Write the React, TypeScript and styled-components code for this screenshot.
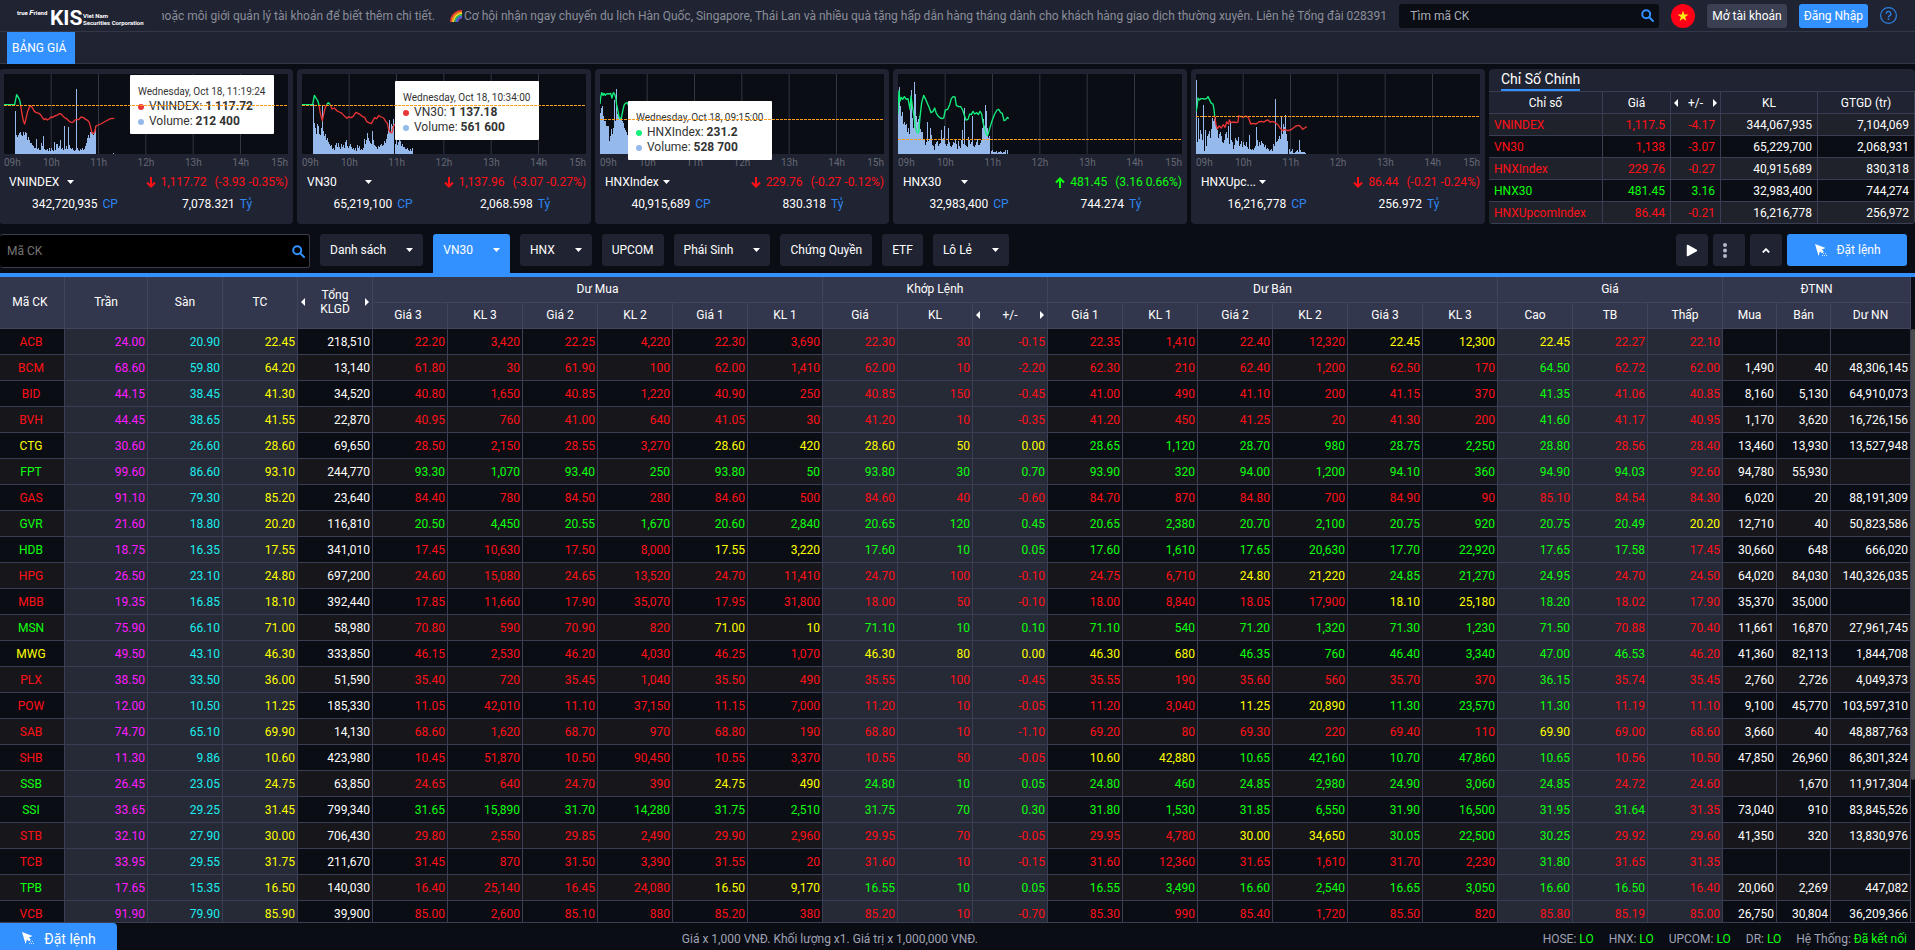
import React from "react";
import styled, { createGlobalStyle, css } from "styled-components";

const color = {
  page: "#0a0d14",
  panel: "#1f2332",
  head: "#33374d",
  shade: "#262936",
  stripe: "#17171b",
  line: "#3a3e55",
  blue: "#3291ff",
  up: "#0fff0f",
  down: "#ff1017",
  ref: "#ffff00",
  ceil: "#ff1cff",
  floor: "#1ceeee",
  muted: "#a0a3b5",
};

const GlobalStyle = createGlobalStyle`
  *, *::before, *::after { box-sizing: border-box; }
  body {
    margin: 0;
    background: ${color.page};
    color: #fff;
    font: 400 12px/14px Roboto, "Liberation Sans", sans-serif;
  }
  button, input, select { font: inherit; color: inherit; }
`;

const Page = styled.div`
  display: flex;
  flex-direction: column;
  height: 100vh;
  overflow: hidden;
`;

/* ---------- top bar ---------- */

const TopBar = styled.header`
  display: flex;
  align-items: center;
  gap: 12px;
  height: 32px;
  flex: none;
  padding: 0 18px 0 17px;
  background: ${color.panel};
  border-bottom: 1px solid #343747;
`;

const Logo = styled.a`
  display: flex;
  align-items: center;
  width: 133px;
  height: 31px;
  color: #fff;
  text-decoration: none;
`;

const LogoSmall = styled.span`
  align-self: flex-start;
  width: 33px;
  margin-top: 9px;
  font-size: 6px;
  line-height: 7px;
  font-weight: 700;
  white-space: nowrap;
  i { font-size: 8px; }
`;

const LogoName = styled.span`
  width: 33px;
  font-size: 21px;
  line-height: 24px;
  font-weight: 700;
  padding-top: 4px;
`;

const LogoCompany = styled.span`
  font-size: 6px;
  line-height: 7px;
  font-weight: 700;
  padding-top: 6px;
  white-space: nowrap;
`;

const Ticker = styled.p`
  display: flex;
  align-items: center;
  flex: 1;
  min-width: 0;
  height: 31px;
  margin: 0;
  overflow: hidden;
  white-space: pre;
  text-indent: -4px;
  color: #8b8e99;
  svg {
    flex: none;
    margin: 0 2px 0 15px;
  }
`;

const TickerItem = styled.span`
  flex: none;
  & + svg + & { text-indent: 0; }
`;

const SearchBox = styled.label<{ $large?: boolean }>`
  display: flex;
  align-items: center;
  border-radius: 3px;
  ${(p) =>
    p.$large
      ? css`
          width: 310px;
          height: 34px;
          padding: 0 4px 0 7px;
          background: #000;
          border: 1px solid #3a3d4d;
          border-left: 0;
        `
      : css`
          width: 260px;
          height: 24px;
          padding: 0 5px 0 11px;
          background: ${color.page};
        `}
  input {
    flex: 1;
    min-width: 0;
    padding: 0;
    border: 0;
    outline: 0;
    background: transparent;
  }
  input::placeholder {
    color: ${(p) => (p.$large ? "#757575" : "#a9acb6")};
    opacity: 1;
  }
`;

const IconButton = styled.button`
  display: flex;
  padding: 0;
  border: 0;
  background: none;
  cursor: pointer;
`;

const AccountButton = styled.button<{ $primary?: boolean }>`
  height: 24px;
  padding: 0 5px;
  border: 0;
  border-radius: 3px;
  white-space: nowrap;
  background: ${(p) => (p.$primary ? color.blue : "#3b3f52")};
`;

const TabBar = styled.nav`
  display: flex;
  flex: none;
  height: 32px;
  padding-left: 7px;
  background: ${color.panel};
  border-bottom: 1px solid #343747;
`;

const Tab = styled.a`
  height: 32px;
  padding: 0 9px 0 5px;
  line-height: 32px;
  color: #fff;
  background: ${color.blue};
  text-decoration: none;
`;

/* ---------- index panels ---------- */

const Overview = styled.section`
  display: grid;
  grid-template-columns: repeat(5, minmax(0, 294fr)) minmax(0, 426fr);
  gap: 4px;
  flex: none;
  margin: 5px 0 10px -1px;
`;

const Panel = styled.article`
  height: 155px;
  padding: 5px;
  border-radius: 4px;
  background: ${color.panel};
`;

const Plot = styled.div`
  position: relative;
  height: 80px;
  background: ${color.page};
  svg {
    display: block;
    width: 100%;
    height: 80px;
  }
`;

const RefLine = styled.i`
  position: absolute;
  left: 0;
  right: 0;
  height: 1px;
  background: repeating-linear-gradient(90deg, #ff9b18 0 3px, transparent 3px 4px);
`;

const Tooltip = styled.div`
  position: absolute;
  width: 144px;
  height: 59px;
  padding: 9px 0 0 8px;
  border-radius: 1px;
  background: #fff;
  color: #333;
  line-height: 15px;
  white-space: pre;
  time {
    display: block;
    font-size: 10px;
  }
  div {
    display: flex;
    align-items: center;
  }
  b { font-weight: 700; }
`;

const Dot = styled.i<{ $color: string }>`
  width: 6px;
  height: 6px;
  margin-right: 5px;
  border-radius: 50%;
  background: ${(p) => p.$color};
`;

const Axis = styled.div`
  display: grid;
  grid-template-columns: 1fr repeat(5, 2fr) 1fr;
  height: 17px;
  padding-top: 2px;
  font-size: 10px;
  color: #666873;
  span { text-align: center; }
  span:first-child { text-align: left; }
  span:last-child { text-align: right; }
`;

const QuoteRow = styled.div`
  display: flex;
  align-items: center;
  justify-content: space-between;
  height: 22px;
  padding-left: 5px;
`;

const Picker = styled.span`
  display: flex;
  align-items: center;
  select {
    width: 58px;
    padding: 0;
    border: 0;
    outline: 0;
    appearance: none;
    background: transparent;
  }
`;

const Change = styled.span<{ $up?: boolean }>`
  display: flex;
  align-items: center;
  white-space: nowrap;
  color: ${(p) => (p.$up ? color.up : color.down)};
  svg { margin-right: 5px; }
  span { margin-right: 8px; }
`;

const Totals = styled.div`
  display: grid;
  grid-template-columns: 1fr 1fr;
  height: 22px;
  line-height: 22px;
  text-align: center;
  i {
    margin-left: 5px;
    font-style: normal;
    color: #2f86f3;
  }
`;

const IndexPanel = styled(Panel)`
  padding: 0;
  overflow: hidden;
  h2 {
    width: max-content;
    height: 22px;
    margin: 0 0 0 12px;
    font-size: 14px;
    line-height: 21px;
    font-weight: 400;
    border-bottom: 2px solid ${color.blue};
  }
`;

const IndexTable = styled.table`
  width: 100%;
  table-layout: fixed;
  border-spacing: 0;
  border-top: 1px solid ${color.line};
  th, td {
    height: 22px;
    padding: 0 5px;
    border: solid ${color.line};
    border-width: 0 1px 1px 0;
    text-align: right;
    font-weight: 400;
  }
  thead th {
    padding: 0;
    text-align: center;
  }
  tbody th { text-align: left; }
  tbody tr { background: #20222b; }
  tbody tr:nth-child(even) { background: ${color.page}; }
`;

const IndexCell = styled.td<{ $color?: string }>`
  color: ${(p) => p.$color || "#fff"};
`;

const Switcher = styled.span`
  display: flex;
  align-items: center;
  justify-content: space-between;
  padding: 0 3px;
`;

/* ---------- list toolbar ---------- */

const Toolbar = styled.section`
  display: flex;
  gap: 10px;
  flex: none;
  height: 43px;
  padding-right: 8px;
  border-bottom: 4px solid ${color.blue};
`;

const ListButton = styled.button<{ $active?: boolean }>`
  display: flex;
  align-items: center;
  gap: 20px;
  height: 32px;
  padding: 0 10px;
  border: 0;
  border-radius: 3px;
  white-space: nowrap;
  background: ${color.panel};
  ${(p) =>
    p.$active &&
    css`
      height: 39px;
      padding-bottom: 7px;
      border-radius: 3px 3px 0 0;
      background: ${color.blue};
    `}
`;

const Tools = styled.div`
  display: flex;
  gap: 5px;
  margin-left: auto;
`;

const ToolButton = styled.button<{ $start?: boolean }>`
  display: flex;
  align-items: center;
  justify-content: ${(p) => (p.$start ? "flex-start" : "center")};
  width: 32px;
  height: 32px;
  padding: ${(p) => (p.$start ? "0 10px" : "0")};
  border: 0;
  border-radius: 3px;
  background: ${color.panel};
`;

const OrderButton = styled.button<{ $docked?: boolean }>`
  display: flex;
  align-items: center;
  justify-content: center;
  gap: 10px;
  padding: 0;
  border: 0;
  background: ${color.blue};
  ${(p) =>
    p.$docked
      ? css`
          width: 117px;
          height: 27px;
          padding-top: 4px;
          border-radius: 0 4px 0 0;
          font-size: 14px;
        `
      : css`
          width: 120px;
          height: 32px;
          border-radius: 3px;
        `}
`;

/* ---------- price board ---------- */

const Board = styled.main`
  display: flex;
  flex: 1;
  min-height: 0;
  overflow: hidden;
  border-bottom: 1px solid ${color.line};
`;

const BoardTable = styled.table`
  flex: 1;
  min-width: 0;
  height: max-content;
  table-layout: fixed;
  border-spacing: 0;
  th, td {
    height: 26px;
    padding: 0 2px;
    border: solid ${color.line};
    border-width: 0 1px 1px 0;
    font-weight: 400;
    text-align: right;
    white-space: nowrap;
  }
  th:first-child { padding-right: 4px; }
  thead th {
    padding: 0 0 2px;
    text-align: center;
    background: ${color.head};
    border-color: #41455b;
  }
  tbody th { text-align: center; }
  tbody tr { background: ${color.page}; }
  tbody tr:nth-child(even) { background: ${color.stripe}; }
`;

const Symbol = styled.th<{ $color: string }>`
  color: ${(p) => p.$color};
`;

const Cell = styled.td<{ $color: string; $shaded?: boolean }>`
  color: ${(p) => p.$color};
  ${(p) => p.$shaded && `background: ${color.shade};`}
`;

const ScrollTrack = styled.div`
  flex: none;
  width: 4px;
  padding-top: 52px;
`;

const ScrollThumb = styled.div`
  height: 76%;
  border-radius: 2px;
  background: #4b4b4d;
`;

const Footer = styled.footer`
  display: flex;
  align-items: center;
  justify-content: space-between;
  flex: none;
  height: 27px;
  padding-right: 8px;
  color: ${color.muted};
  button { color: #fff; }
`;

const FooterNote = styled.p`
  margin: 0;
  padding-top: 4px;
`;

const StatusList = styled.div`
  display: flex;
  gap: 15px;
  padding-top: 4px;
  b {
    font-weight: 400;
    color: ${color.up};
  }
`;

/* ---------- icons ---------- */

const SearchIcon = () => (
  <svg width="13" height="13" viewBox="0 0 13 13" fill="none" stroke={color.blue} strokeWidth="2">
    <circle cx="5.2" cy="5.2" r="4" />
    <path d="M8.2 8.2L12 12" strokeLinecap="round" />
  </svg>
);

const Caret = () => (
  <svg width="7" height="4" viewBox="0 0 7 4">
    <path d="M0 0h7L3.500 4z" fill="#fff" />
  </svg>
);

const SideArrow = ({ right }: { right?: boolean }) => (
  <svg width="4" height="8" viewBox="0 0 4 8">
    <path d={right ? "M0 0L4 4L0 8z" : "M4 0L0 4L4 8z"} fill="#fff" />
  </svg>
);

const TrendArrow = ({ up }: { up?: boolean }) => (
  <svg width="10" height="11" viewBox="0 0 10 11" fill="none" stroke="currentColor" strokeWidth="2">
    <path d={up ? "M5 11V1.500M1 5.500L5 1.500L9 5.500" : "M5 0V9.500M1 5.500L5 9.500L9 5.500"} />
  </svg>
);

const OrderIcon = () => (
  <svg width="13" height="13" viewBox="0 0 13 13" fill="#fff">
    <path d="M1 0L11.500 4L7.800 5.400L9.800 7.400L8 9.200L6 7.200L4.600 12z" />
    <g fill="#cfe5ff">
      <rect x="9" y="9" width="1" height="1" />
      <rect x="8" y="11" width="1" height="1" />
      <rect x="10" y="11" width="1" height="1" />
      <rect x="11" y="9" width="1" height="1" />
      <rect x="12" y="11" width="1" height="1" />
    </g>
  </svg>
);

const Rainbow = () => (
  <svg width="12" height="12" viewBox="0 0 12 12" fill="none" strokeWidth="1.500">
    <path d="M.8 12A11 11 0 0 1 12 .8" stroke="#f0392b" />
    <path d="M2.200 12A9.800 9.800 0 0 1 12 2.200" stroke="#fb9a1d" />
    <path d="M3.600 12A8.400 8.400 0 0 1 12 3.600" stroke="#ffe43a" />
    <path d="M5 12A7 7 0 0 1 12 5" stroke="#3cc24a" />
    <path d="M6.400 12A5.600 5.600 0 0 1 12 6.400" stroke="#2c7be8" />
    <path d="M7.700 12A4.300 4.300 0 0 1 12 7.700" stroke="#8a4bc9" />
  </svg>
);

/* ---------- index data ---------- */

// Line points use a 852 x 240 grid; volumes are one bar per pixel of 80.
type Series = { points: string; up: boolean };

interface IndexInfo {
  name: string;
  up?: boolean;
  price: string;
  change: string;
  volume: string;
  value: string;
  refY: number;
  lines: Series[];
  barStart: number;
  bars: number[];
  tip?: { left: number; top: number; time: string; label: string; price: string; volume: string; dot: string };
}

const GREEN = "#13f07d";
const RED = "#e83535";

const indices: IndexInfo[] = [
  {
    name: "VNINDEX",
    price: "1,117.72",
    change: "(-3.93 -0.35%)",
    volume: "342,720,935",
    value: "7,078.321",
    refY: 31,
    lines: [
      { up: true, points: "0,92 32,92 35,76 38,62 43,70 47,78 50,94" },
      {
        up: false,
        points:
          "50,94 54,120 58,140 62,150 66,134 71,112 76,100 81,96 86,102 91,112 97,116 103,117 109,121 114,129 120,137 126,134 130,138 135,135 141,129 146,130 152,126 158,124 164,120 170,119 175,124 181,131 188,134 194,140 200,145 207,145 213,138 217,136 224,137 231,129 238,131 245,136 251,139 256,146 260,160 264,177 269,178 272,174 276,156 290,150 306,141 320,134 331,133",
      },
    ],
    barStart: 11,
    bars: [43, 19, 17, 19, 21, 22, 19, 18, 22, 19, 22, 21, 14, 17, 14, 11, 11, 9, 8, 6, 6, 15, 5, 6, 4, 4, 11, 8, 18, 5, 4, 4, 5, 3, 6, 3, 6, 4, 3, 12, 4, 10, 10, 6, 8, 14, 5, 6, 4, 28, 5, 8, 5, 27, 9, 6, 5, 6, 4, 3, 4, 65, 6, 4, 3, 5, 4, 6, 4, 5, 8, 11, 16, 19, 16, 22, 24, 22, 19, 23, 28, 0, 0, 0, 0, 0, 0, 0, 0, 0, 0, 0, 0, 0, 0, 0, 0, 0, 1],
    tip: { left: 126, top: 1, time: "Wednesday, Oct 18, 11:19:24", label: "VNINDEX", price: "1 117.72", volume: "212 400", dot: RED },
  },
  {
    name: "VN30",
    price: "1,137.96",
    change: "(-3.07 -0.27%)",
    volume: "65,219,100",
    value: "2,068.598",
    refY: 31,
    lines: [
      { up: true, points: "0,92 32,92 37,64 42,72 48,82 51,94" },
      { up: false, points: "51,94 55,118 61,140 66,116 70,100 74,92" },
      { up: true, points: "74,92 79,86 85,92" },
      {
        up: false,
        points:
          "85,92 90,105 97,102 104,110 112,114 120,118 128,127 135,133 140,128 147,131 153,128 158,120 162,115 168,118 175,122 182,128 188,130 194,142 200,146 208,149 213,140 218,131 224,134 230,125 238,129 245,132 251,142 256,148 260,166 265,176 270,176 275,156 279,150",
      },
    ],
    barStart: 11,
    bars: [50, 31, 26, 20, 30, 28, 20, 19, 26, 48, 23, 18, 20, 14, 16, 12, 10, 8, 9, 5, 6, 4, 9, 11, 7, 11, 7, 5, 10, 7, 9, 6, 12, 14, 8, 6, 8, 10, 7, 5, 6, 4, 6, 3, 9, 6, 8, 4, 5, 4, 6, 15, 10, 14, 21, 16, 13, 11, 10, 23, 14, 9, 8, 7, 5, 8, 7, 9, 10, 8, 9, 13, 11, 15, 20, 26, 34, 22, 30, 28, 35, 0, 10, 16, 9, 12, 14, 13, 8, 10, 7, 7, 5, 5, 6, 4, 3, 5, 3, 6],
    tip: { left: 93, top: 7, time: "Wednesday, Oct 18, 10:34:00", label: "VN30", price: "1 137.18", volume: "561 600", dot: RED },
  },
  {
    name: "HNXIndex",
    price: "229.76",
    change: "(-0.27 -0.12%)",
    volume: "40,915,689",
    value: "830.318",
    refY: 45,
    lines: [
      {
        up: true,
        points:
          "0,90 2,70 5,56 9,64 12,58 16,64 20,59 26,60 32,58 36,72 40,56 44,60 47,70 50,92 54,112 58,134 64,132 68,112 72,94 76,88 82,86 86,96",
      },
    ],
    barStart: 0,
    bars: [41, 46, 48, 38, 33, 33, 28, 28, 28, 13, 18, 25, 20, 26, 54, 33, 65, 40, 38, 36, 34, 36, 33, 31, 26, 24, 22, 19, 20],
    tip: { left: 28, top: 27, time: "Wednesday, Oct 18, 09:15:00", label: "HNXIndex", price: "231.2", volume: "528 700", dot: "#13f07d" },
  },
  {
    name: "HNX30",
    up: true,
    price: "481.45",
    change: "(3.16 0.66%)",
    volume: "32,983,400",
    value: "744.274",
    refY: 65,
    lines: [
      {
        up: true,
        points:
          "0,120 3,50 6,82 10,70 14,76 19,68 25,76 30,74 36,106 39,66 43,96 47,120 52,160 57,176 62,176 66,130 71,86 77,64 83,76 88,88 95,104 99,116 105,112 110,102 115,118 121,127 127,132 133,134 137,132 142,108 149,106 155,92 160,74 165,68 171,69 175,94 182,98 188,98 194,108 199,124 204,138 210,136 215,120 220,122 225,112 230,120 236,116 241,122 246,112 251,120 255,146 260,164 266,184 270,182 276,160 283,138 290,120 297,108 302,106 308,116 313,118 318,140 323,138 328,130 332,134",
      },
    ],
    barStart: 0,
    bars: [50, 67, 48, 38, 42, 30, 32, 29, 30, 22, 26, 20, 45, 64, 36, 26, 72, 60, 38, 32, 35, 38, 25, 22, 22, 14, 15, 9, 12, 32, 13, 15, 26, 19, 9, 8, 4, 10, 12, 13, 8, 10, 11, 24, 14, 16, 28, 10, 8, 10, 26, 12, 8, 7, 9, 12, 11, 15, 10, 5, 13, 8, 6, 14, 24, 10, 46, 9, 8, 7, 17, 14, 10, 12, 38, 8, 7, 9, 12, 15, 9, 9, 11, 14, 26, 35, 28, 49, 43, 26, 16, 18, 0, 3, 4, 2, 2, 2, 3, 1, 2, 2, 3, 2, 1, 2, 2, 4, 0, 4],
  },
  {
    name: "HNXUpc...",
    price: "86.44",
    change: "(-0.21 -0.24%)",
    volume: "16,216,778",
    value: "256.972",
    refY: 42,
    lines: [
      { up: true, points: "0,112 3,100 6,72 10,78 14,74 20,74 26,75 32,74 36,68 40,76 46,88 51,90 54,106 56,126" },
      {
        up: false,
        points:
          "56,126 60,152 64,164 70,156 76,162 82,152 87,160 92,144 98,150 100,138 105,146 112,144 120,146 126,144 128,126 136,128 142,130 150,126 158,132 164,150 172,148 180,150 188,144 196,142 204,144 210,140 216,138 222,144 230,142 238,146 246,152 252,162 260,170 266,166 274,170 284,168 292,162 300,156 308,154 314,158 320,166 326,162 332,158",
      },
    ],
    barStart: 0,
    bars: [74, 12, 36, 15, 24, 20, 14, 49, 3, 24, 8, 18, 20, 23, 16, 25, 36, 33, 35, 37, 28, 24, 16, 20, 22, 18, 12, 11, 14, 20, 22, 16, 28, 10, 32, 14, 12, 5, 9, 16, 14, 13, 17, 8, 10, 13, 7, 12, 9, 8, 12, 7, 5, 19, 5, 4, 5, 4, 6, 8, 27, 14, 8, 12, 9, 13, 11, 10, 7, 9, 5, 6, 5, 3, 4, 5, 3, 10, 8, 55, 12, 13, 15, 18, 15, 38, 20, 30, 27, 39, 20, 13, 0, 5, 2, 3, 5, 1, 1, 2, 3, 4, 2, 14, 4, 2, 2, 2, 2, 1],
  },
];

const hours = ["09h", "10h", "11h", "12h", "13h", "14h", "15h"];

const summary = [
  ["VNINDEX", "1,117.5", "-4.17", "344,067,935", "7,104,069"],
  ["VN30", "1,138", "-3.07", "65,229,700", "2,068,931"],
  ["HNXIndex", "229.76", "-0.27", "40,915,689", "830,318"],
  ["HNX30", "481.45", "3.16", "32,983,400", "744,274"],
  ["HNXUpcomIndex", "86.44", "-0.21", "16,216,778", "256,972"],
];

const lists: { label: string; menu?: boolean; active?: boolean }[] = [
  { label: "Danh sách", menu: true },
  { label: "VN30", menu: true, active: true },
  { label: "HNX", menu: true },
  { label: "UPCOM" },
  { label: "Phái Sinh", menu: true },
  { label: "Chứng Quyền" },
  { label: "ETF" },
  { label: "Lô Lẻ", menu: true },
];

/* ---------- board data: one stock per line, "_" marks an empty cell ---------- */

const stocks = `
ACB 24.00 20.90 22.45 218,510 22.20 3,420 22.25 4,220 22.30 3,690 22.30 30 -0.15 22.35 1,410 22.40 12,320 22.45 12,300 22.45 22.27 22.10 _ _ _
BCM 68.60 59.80 64.20 13,140 61.80 30 61.90 100 62.00 1,410 62.00 10 -2.20 62.30 210 62.40 1,200 62.50 170 64.50 62.72 62.00 1,490 40 48,306,145
BID 44.15 38.45 41.30 34,520 40.80 1,650 40.85 1,220 40.90 250 40.85 150 -0.45 41.00 490 41.10 200 41.15 370 41.35 41.06 40.85 8,160 5,130 64,910,073
BVH 44.45 38.65 41.55 22,870 40.95 760 41.00 640 41.05 30 41.20 10 -0.35 41.20 450 41.25 20 41.30 200 41.60 41.17 40.95 1,170 3,620 16,726,156
CTG 30.60 26.60 28.60 69,650 28.50 2,150 28.55 3,270 28.60 420 28.60 50 0.00 28.65 1,120 28.70 980 28.75 2,250 28.80 28.56 28.40 13,460 13,930 13,527,948
FPT 99.60 86.60 93.10 244,770 93.30 1,070 93.40 250 93.80 50 93.80 30 0.70 93.90 320 94.00 1,200 94.10 360 94.90 94.03 92.60 94,780 55,930 _
GAS 91.10 79.30 85.20 23,640 84.40 780 84.50 280 84.60 500 84.60 40 -0.60 84.70 870 84.80 700 84.90 90 85.10 84.54 84.30 6,020 20 88,191,309
GVR 21.60 18.80 20.20 116,810 20.50 4,450 20.55 1,670 20.60 2,840 20.65 120 0.45 20.65 2,380 20.70 2,100 20.75 920 20.75 20.49 20.20 12,710 40 50,823,586
HDB 18.75 16.35 17.55 341,010 17.45 10,630 17.50 8,000 17.55 3,220 17.60 10 0.05 17.60 1,610 17.65 20,630 17.70 22,920 17.65 17.58 17.45 30,660 648 666,020
HPG 26.50 23.10 24.80 697,200 24.60 15,080 24.65 13,520 24.70 11,410 24.70 100 -0.10 24.75 6,710 24.80 21,220 24.85 21,270 24.95 24.70 24.50 64,020 84,030 140,326,035
MBB 19.35 16.85 18.10 392,440 17.85 11,660 17.90 35,070 17.95 31,800 18.00 50 -0.10 18.00 8,840 18.05 17,900 18.10 25,180 18.20 18.02 17.90 35,370 35,000 _
MSN 75.90 66.10 71.00 58,980 70.80 590 70.90 820 71.00 10 71.10 10 0.10 71.10 540 71.20 1,320 71.30 1,230 71.50 70.88 70.40 11,661 16,870 27,961,745
MWG 49.50 43.10 46.30 333,850 46.15 2,530 46.20 4,030 46.25 1,070 46.30 80 0.00 46.30 680 46.35 760 46.40 3,340 47.00 46.53 46.20 41,360 82,113 1,844,708
PLX 38.50 33.50 36.00 51,590 35.40 720 35.45 1,040 35.50 490 35.55 100 -0.45 35.55 190 35.60 560 35.70 370 36.15 35.74 35.45 2,760 2,726 4,049,373
POW 12.00 10.50 11.25 185,330 11.05 42,010 11.10 37,150 11.15 7,000 11.20 10 -0.05 11.20 3,040 11.25 20,890 11.30 23,570 11.30 11.19 11.10 9,100 45,770 103,597,310
SAB 74.70 65.10 69.90 14,130 68.60 1,620 68.70 970 68.80 190 68.80 10 -1.10 69.20 80 69.30 220 69.40 110 69.90 69.00 68.60 3,660 40 48,887,763
SHB 11.30 9.86 10.60 423,980 10.45 51,870 10.50 90,450 10.55 3,370 10.55 50 -0.05 10.60 42,880 10.65 42,160 10.70 47,860 10.65 10.56 10.50 47,850 26,960 86,301,324
SSB 26.45 23.05 24.75 63,850 24.65 640 24.70 390 24.75 490 24.80 10 0.05 24.80 460 24.85 2,980 24.90 3,060 24.85 24.72 24.60 _ 1,670 11,917,304
SSI 33.65 29.25 31.45 799,340 31.65 15,890 31.70 14,280 31.75 2,510 31.75 70 0.30 31.80 1,530 31.85 6,550 31.90 16,500 31.95 31.64 31.35 73,040 910 83,845,526
STB 32.10 27.90 30.00 706,430 29.80 2,550 29.85 2,490 29.90 2,960 29.95 70 -0.05 29.95 4,780 30.00 34,650 30.05 22,500 30.25 29.92 29.60 41,350 320 13,830,976
TCB 33.95 29.55 31.75 211,670 31.45 870 31.50 3,390 31.55 20 31.60 10 -0.15 31.60 12,360 31.65 1,610 31.70 2,230 31.80 31.65 31.35 _ _ _
TPB 17.65 15.35 16.50 140,030 16.40 25,140 16.45 24,080 16.50 9,170 16.55 10 0.05 16.55 3,490 16.60 2,540 16.65 3,050 16.60 16.50 16.40 20,060 2,269 447,082
VCB 91.90 79.90 85.90 39,900 85.00 2,600 85.10 880 85.20 380 85.20 10 -0.70 85.30 990 85.40 1,720 85.50 820 85.80 85.19 85.00 26,750 30,804 36,209,366
`
  .trim()
  .split("\n")
  .map((line) => line.split(" "));

const columnWidths = [65, 83, ...Array(21).fill(75), 54, 54, 80];

// Column whose price decides the colour of each column; 0 keeps it white.
const priceColumn = [11, 1, 2, 3, 0, 5, 5, 7, 7, 9, 9, 11, 11, 11, 14, 14, 16, 16, 18, 18, 20, 21, 22, 0, 0, 0];
const shadedColumns = new Set([1, 2, 3, 11, 12, 13, 20, 21, 22]);

// The average price is never highlighted as unchanged.
const averageColumn = 21;

function cellColor(row: string[], column: number) {
  const source = priceColumn[column];
  if (source === 0) return "#fff";
  if (source === 1) return color.ceil;
  if (source === 2) return color.floor;
  const price = Number(row[source]);
  const reference = Number(row[3]);
  if (price === reference) return column === averageColumn ? color.up : color.ref;
  return price > reference ? color.up : color.down;
}

/* ---------- components ---------- */

function IndexChart({ info }: { info: IndexInfo }) {
  const bars = info.bars
    .map((h, i) => `M${(info.barStart + i) * 3} 240v${-h * 3}h3v${h * 3}z`)
    .join("");
  return (
    <Plot>
      <svg viewBox="0 0 852 240" preserveAspectRatio="none">
        {[1, 2, 3, 4, 5].map((n) => (
          <rect key={n} x={n * 142 - 2} width="3" height="240" fill="#343743" />
        ))}
        <path d={bars} fill="#95b9ea" shapeRendering="crispEdges" />
        {info.lines.map((line, i) => (
          <polyline key={i} points={line.points} fill="none" stroke={line.up ? GREEN : RED} strokeWidth="4" strokeLinejoin="round" />
        ))}
      </svg>
      {info.tip && (
        <Tooltip style={{ left: info.tip.left, top: info.tip.top }}>
          <time>{info.tip.time}</time>
          <div>
            <Dot $color={info.tip.dot} />
            {info.tip.label}: <b>{info.tip.price}</b>
          </div>
          <div>
            <Dot $color="#95b9ea" />
            Volume: <b>{info.tip.volume}</b>
          </div>
        </Tooltip>
      )}
      <RefLine style={{ top: info.refY }} />
    </Plot>
  );
}

function IndexCard({ info }: { info: IndexInfo }) {
  return (
    <Panel>
      <IndexChart info={info} />
      <Axis>
        {hours.map((h) => (
          <span key={h}>{h}</span>
        ))}
      </Axis>
      <QuoteRow>
        <Picker>
          <select aria-label="Chỉ số" defaultValue={info.name}>
            <option>{info.name}</option>
          </select>
          <Caret />
        </Picker>
        <Change $up={info.up}>
          <TrendArrow up={info.up} />
          <span>{info.price}</span>
          {info.change}
        </Change>
      </QuoteRow>
      <Totals>
        <span>
          {info.volume}
          <i>CP</i>
        </span>
        <span>
          {info.value}
          <i>Tỷ</i>
        </span>
      </Totals>
    </Panel>
  );
}

function SummaryTable() {
  return (
    <IndexPanel>
      <h2>Chỉ Số Chính</h2>
      <IndexTable>
        <colgroup>
          {[114, 68, 50, 97, 97].map((w, i) => (
            <col key={i} style={{ width: w }} />
          ))}
        </colgroup>
        <thead>
          <tr>
            <th>Chỉ số</th>
            <th>Giá</th>
            <th>
              <Switcher>
                <SideArrow />
                +/-
                <SideArrow right />
              </Switcher>
            </th>
            <th>KL</th>
            <th>GTGD (tr)</th>
          </tr>
        </thead>
        <tbody>
          {summary.map(([name, price, change, volume, value]) => {
            const c = change.startsWith("-") ? color.down : color.up;
            return (
              <tr key={name}>
                <IndexCell as="th" scope="row" $color={c}>
                  {name}
                </IndexCell>
                <IndexCell $color={c}>{price}</IndexCell>
                <IndexCell $color={c}>{change}</IndexCell>
                <IndexCell>{volume}</IndexCell>
                <IndexCell>{value}</IndexCell>
              </tr>
            );
          })}
        </tbody>
      </IndexTable>
    </IndexPanel>
  );
}

function PriceBoard() {
  return (
    <Board>
      <BoardTable>
        <colgroup>
          {columnWidths.map((w, i) => (
            <col key={i} style={{ width: w }} />
          ))}
        </colgroup>
        <thead>
          <tr>
            <th rowSpan={2}>Mã CK</th>
            <th rowSpan={2}>Trần</th>
            <th rowSpan={2}>Sàn</th>
            <th rowSpan={2}>TC</th>
            <th rowSpan={2}>
              <Switcher>
                <SideArrow />
                <span>
                  Tổng
                  <br />
                  KLGD
                </span>
                <SideArrow right />
              </Switcher>
            </th>
            <th colSpan={6}>Dư Mua</th>
            <th colSpan={3}>Khớp Lệnh</th>
            <th colSpan={6}>Dư Bán</th>
            <th colSpan={3}>Giá</th>
            <th colSpan={3}>ĐTNN</th>
          </tr>
          <tr>
            {["Giá 3", "KL 3", "Giá 2", "KL 2", "Giá 1", "KL 1", "Giá", "KL"].map((t) => (
              <th key={t}>{t}</th>
            ))}
            <th>
              <Switcher>
                <SideArrow />
                +/-
                <SideArrow right />
              </Switcher>
            </th>
            {["Giá 1", "KL 1", "Giá 2", "KL 2", "Giá 3", "KL 3", "Cao", "TB", "Thấp", "Mua", "Bán", "Dư NN"].map((t) => (
              <th key={t}>{t}</th>
            ))}
          </tr>
        </thead>
        <tbody>
          {stocks.map((row) => (
            <tr key={row[0]}>
              <Symbol scope="row" $color={cellColor(row, 0)}>
                {row[0]}
              </Symbol>
              {row.slice(1).map((value, i) => (
                <Cell key={i} $color={cellColor(row, i + 1)} $shaded={shadedColumns.has(i + 1)}>
                  {value === "_" ? "" : value}
                </Cell>
              ))}
            </tr>
          ))}
        </tbody>
      </BoardTable>
      <ScrollTrack>
        <ScrollThumb />
      </ScrollTrack>
    </Board>
  );
}

export default function App() {
  return (
    <Page>
      <GlobalStyle />
      <TopBar>
        <Logo href="#">
          <LogoSmall>
            true <i>F</i>riend
          </LogoSmall>
          <LogoName>KIS</LogoName>
          <LogoCompany>
            Viet Nam
            <br />
            Securities Corporation
          </LogoCompany>
        </Logo>
        <Ticker>
          <TickerItem>hoặc môi giới quản lý tài khoản để biết thêm chi tiết.</TickerItem>
          <Rainbow />
          <TickerItem>
            Cơ hội nhận ngay chuyến du lịch Hàn Quốc, Singapore, Thái Lan và nhiều quà tặng hấp dẫn hàng tháng dành cho khách
            hàng giao dịch thường xuyên. Liên hệ Tổng đài 0283914
          </TickerItem>
        </Ticker>
        <SearchBox>
          <input aria-label="Tìm mã CK" placeholder="Tìm mã CK" />
          <SearchIcon />
        </SearchBox>
        <IconButton aria-label="Tiếng Việt">
          <svg width="24" height="24" viewBox="0 0 24 24">
            <circle cx="12" cy="12" r="12" fill="#ff0016" />
            <path d="M12 6.500l1.300 4h4.200l-3.400 2.400 1.300 4L12 14.400l-3.400 2.500 1.300-4-3.400-2.400h4.200z" fill="#ffee14" />
          </svg>
        </IconButton>
        <AccountButton>Mở tài khoản</AccountButton>
        <AccountButton $primary>Đăng Nhập</AccountButton>
        <IconButton aria-label="Trợ giúp">
          <svg width="17" height="17" viewBox="0 0 17 17" fill="none" stroke="#2f80e0">
            <circle cx="8.500" cy="8.500" r="7.900" strokeWidth="1.200" />
            <path d="M6.200 6.800a2.300 2.300 0 1 1 3.500 1.900c-.8.500-1.200.9-1.200 1.700" strokeWidth="1.400" />
            <path d="M8.500 11.500v1.500" strokeWidth="1.600" />
          </svg>
        </IconButton>
      </TopBar>
      <TabBar>
        <Tab href="#">BẢNG GIÁ</Tab>
      </TabBar>
      <Overview>
        {indices.map((info) => (
          <IndexCard key={info.name} info={info} />
        ))}
        <SummaryTable />
      </Overview>
      <Toolbar>
        <SearchBox $large>
          <input aria-label="Mã CK" placeholder="Mã CK" />
          <SearchIcon />
        </SearchBox>
        {lists.map((list) => (
          <ListButton key={list.label} $active={list.active}>
            {list.label}
            {list.menu && <Caret />}
          </ListButton>
        ))}
        <Tools>
          <ToolButton aria-label="Chạy bảng giá">
            <svg width="12" height="13" viewBox="0 0 12 13">
              <path d="M1.500 1.500v10L10.500 6.500z" fill="#fff" stroke="#fff" strokeWidth="1.500" strokeLinejoin="round" />
            </svg>
          </ToolButton>
          <ToolButton aria-label="Tuỳ chọn" $start>
            <svg width="4" height="15" viewBox="0 0 4 15" fill="#b5b8cc">
              <circle cx="2" cy="2" r="2" />
              <circle cx="2" cy="7.500" r="2" />
              <circle cx="2" cy="13" r="2" />
            </svg>
          </ToolButton>
          <ToolButton aria-label="Thu gọn">
            <svg width="8" height="5" viewBox="0 0 8 5" fill="none" stroke="#fff" strokeWidth="1.800">
              <path d="M.8 4.500L4 1.200L7.200 4.500" />
            </svg>
          </ToolButton>
          <OrderButton>
            <OrderIcon />
            Đặt lệnh
          </OrderButton>
        </Tools>
      </Toolbar>
      <PriceBoard />
      <Footer>
        <OrderButton $docked>
          <OrderIcon />
          Đặt lệnh
        </OrderButton>
        <FooterNote>Giá x 1,000 VNĐ. Khối lượng x1. Giá trị x 1,000,000 VNĐ.</FooterNote>
        <StatusList>
          <span>
            HOSE: <b>LO</b>
          </span>
          <span>
            HNX: <b>LO</b>
          </span>
          <span>
            UPCOM: <b>LO</b>
          </span>
          <span>
            DR: <b>LO</b>
          </span>
          <span>
            Hệ Thống: <b>Đã kết nối</b>
          </span>
        </StatusList>
      </Footer>
    </Page>
  );
}
